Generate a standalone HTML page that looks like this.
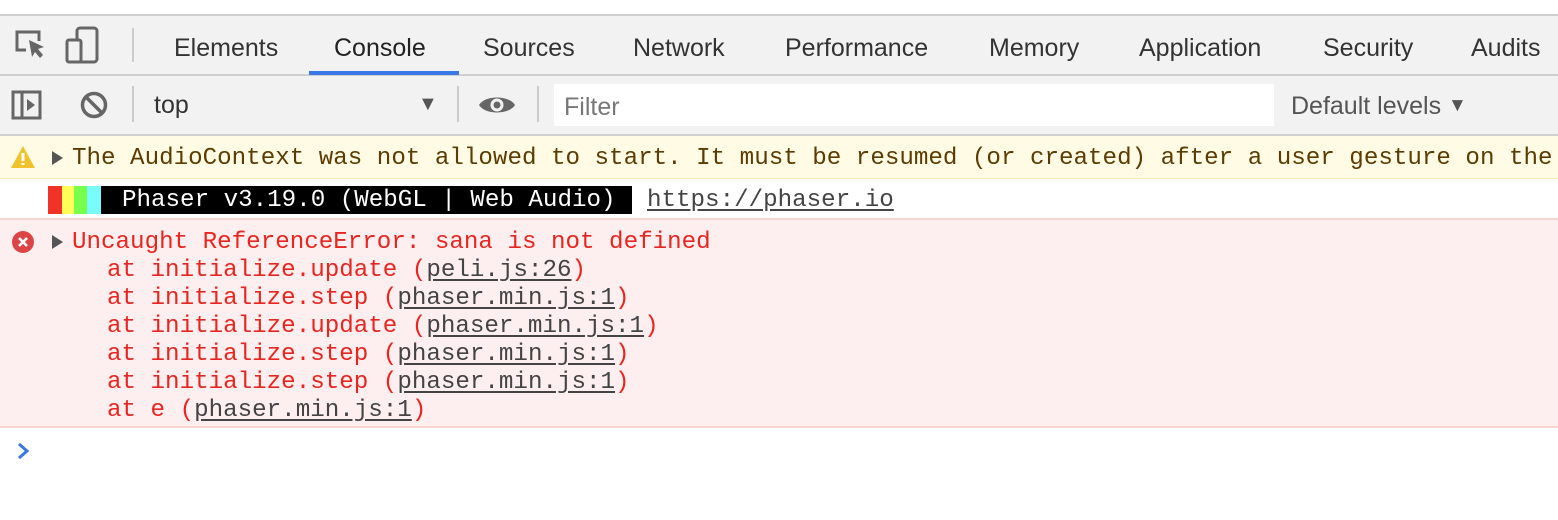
<!DOCTYPE html>
<html><head><style>
body{margin:0;width:1558px;height:520px;position:relative;background:#fff;overflow:hidden;font-family:"Liberation Sans",sans-serif}
.a{position:absolute}
.tab{position:absolute;top:18px;height:58px;line-height:60px;font-size:25px;color:#333}
.m{font-family:"Liberation Mono",monospace;font-size:24.2px;white-space:pre;position:absolute;left:72px}
u{text-decoration:underline;color:#444;text-underline-offset:3px}
</style></head><body>
<div class="a" style="top:14px;left:0;width:1558px;height:2px;background:#cfcfcf"></div>
<div class="a" style="top:16px;left:0;width:1558px;height:58px;background:#f2f2f2"></div>
<div class="a" style="top:74px;left:0;width:1558px;height:2px;background:#cfcfcf"></div>
<div class="a" style="top:76px;left:0;width:1558px;height:58px;background:#f2f2f2"></div>
<div class="a" style="top:134px;left:0;width:1558px;height:2px;background:#d0d0d0"></div>
<svg class="a" style="left:14px;top:28px" width="36" height="36" viewBox="0 0 36 36"><path d="M12 22H3V4h22v9" fill="none" stroke="#666" stroke-width="3"/><path d="M15 12l15 7-6 2 5 6-3 3-5-6-3 5z" fill="#666"/></svg>
<svg class="a" style="left:64px;top:26px" width="36" height="40" viewBox="0 0 36 40"><rect x="13" y="2" width="20" height="34" rx="3" fill="none" stroke="#666" stroke-width="3"/><rect x="3" y="14" width="14" height="22" rx="2" fill="#f2f2f2" stroke="#666" stroke-width="3"/></svg>
<div class="a" style="left:132px;top:28px;width:2px;height:34px;background:#ccc"></div>
<div class="tab" style="left:174px">Elements</div>
<div class="tab" style="left:334px;color:#222">Console</div>
<div class="a" style="left:309px;top:71px;width:150px;height:4px;background:#3b78e7"></div>
<div class="tab" style="left:483px">Sources</div>
<div class="tab" style="left:633px">Network</div>
<div class="tab" style="left:785px">Performance</div>
<div class="tab" style="left:989px">Memory</div>
<div class="tab" style="left:1139px">Application</div>
<div class="tab" style="left:1323px">Security</div>
<div class="tab" style="left:1471px">Audits</div>
<svg class="a" style="left:11px;top:89px" width="32" height="32" viewBox="0 0 32 32"><rect x="2" y="3" width="27" height="26" fill="none" stroke="#666" stroke-width="3"/><path d="M11 3v26" stroke="#666" stroke-width="3"/><path d="M16 10l8 6-8 6z" fill="#666"/></svg>
<svg class="a" style="left:79px;top:90px" width="30" height="30" viewBox="0 0 30 30"><circle cx="15" cy="15" r="11.5" fill="none" stroke="#666" stroke-width="3.5"/><path d="M7 7l16 16" stroke="#666" stroke-width="3.5"/></svg>
<div class="a" style="left:132px;top:86px;width:2px;height:36px;background:#ccc"></div>
<div class="a" style="left:154px;top:91px;font-size:25px;color:#333">top</div>
<div class="a" style="left:418px;top:93px;font-size:20px;color:#555">▼</div>
<div class="a" style="left:457px;top:86px;width:2px;height:36px;background:#ccc"></div>
<svg class="a" style="left:477px;top:91px" width="40" height="28" viewBox="0 0 40 28"><path d="M2 14C8 4 32 4 38 14 32 24 8 24 2 14z" fill="#666"/><circle cx="20" cy="14" r="6.5" fill="#f2f2f2"/><circle cx="20" cy="14" r="3.5" fill="#666"/></svg>
<div class="a" style="left:537px;top:86px;width:2px;height:36px;background:#ccc"></div>
<div class="a" style="left:554px;top:84px;width:720px;height:42px;background:#fff"></div>
<div class="a" style="left:564px;top:93px;font-size:25px;color:#777">Filter</div>
<div class="a" style="left:1291px;top:92px;font-size:25px;color:#555">Default levels <span style="font-size:19px;position:relative;top:-3px">▼</span></div>
<div class="a" style="top:136px;left:0;width:1558px;height:43px;background:#fffbe5"></div>
<div class="a" style="top:178px;left:0;width:1558px;height:1px;background:#f5e9b8"></div>
<svg class="a" style="left:10px;top:145px" width="26" height="24" viewBox="0 0 26 24"><path d="M13 1L25 23H1z" fill="#f0c22e"/><path d="M13 8v8M13 18v2" stroke="#fff" stroke-width="3"/></svg>
<div class="a" style="left:52px;top:151px;width:0;height:0;border-left:11px solid #555;border-top:7px solid transparent;border-bottom:7px solid transparent"></div>
<div class="m" style="top:145px;color:#5c3c00">The AudioContext was not allowed to start. It must be resumed (or created) after a user gesture on the</div>
<div class="a" style="left:48px;top:186px;width:14px;height:28px;background:#f03228"></div>
<div class="a" style="left:62px;top:186px;width:12px;height:28px;background:#ffff5a"></div>
<div class="a" style="left:74px;top:186px;width:13px;height:28px;background:#78ff4c"></div>
<div class="a" style="left:87px;top:186px;width:14px;height:28px;background:#78fcfc"></div>
<div class="a" style="left:101px;top:186px;width:531px;height:28px;background:#000"></div>
<div class="m" style="left:122px;top:187px;color:#fff">Phaser v3.19.0 (WebGL | Web Audio)</div>
<div class="m" style="left:647px;top:187px;color:#333"><u>https://phaser.io</u></div>
<div class="a" style="top:218px;left:0;width:1558px;height:210px;background:#fdeff0;border-top:2px solid #f6d5d5;border-bottom:2px solid #f6d5d5;box-sizing:border-box"></div>
<svg class="a" style="left:11px;top:230px" width="24" height="24" viewBox="0 0 24 24"><circle cx="12" cy="12" r="11" fill="#dc4545"/><path d="M8 8l8 8M16 8l-8 8" stroke="#fff" stroke-width="2.6"/></svg>
<div class="a" style="left:52px;top:235px;width:0;height:0;border-left:11px solid #555;border-top:7px solid transparent;border-bottom:7px solid transparent"></div>
<div class="m" style="top:229px;color:#e8261f;line-height:28px">Uncaught ReferenceError: sana is not defined</div>
<div class="m" style="left:107px;top:257px;color:#e8261f;line-height:28px">at initialize.update (<u>peli.js:26</u>)
at initialize.step (<u>phaser.min.js:1</u>)
at initialize.update (<u>phaser.min.js:1</u>)
at initialize.step (<u>phaser.min.js:1</u>)
at initialize.step (<u>phaser.min.js:1</u>)
at e (<u>phaser.min.js:1</u>)</div>
<svg class="a" style="left:16px;top:442px" width="16" height="18" viewBox="0 0 16 18"><path d="M3 2l8 7-8 7" fill="none" stroke="#3a78e0" stroke-width="3"/></svg>
</body></html>
